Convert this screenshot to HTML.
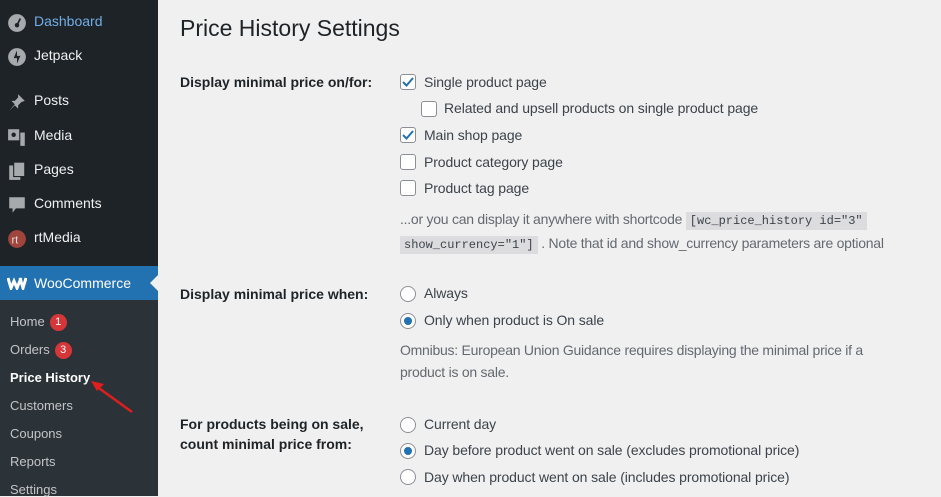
<!DOCTYPE html>
<html><head><style>
*{margin:0;padding:0;box-sizing:border-box}
body{width:941px;height:496px;overflow:hidden;background:#f0f0f1;font-family:"Liberation Sans",sans-serif;font-size:14px;color:#3c434a;position:relative}
#side{position:absolute;left:0;top:0;width:158px;height:496px;background:#1d2327}
.mi{position:absolute;left:0;width:158px;color:#f0f0f1;font-size:14px}
.mi .ic{position:absolute;left:7px;width:20px;height:20px}
.mi span.t{position:absolute;left:34px}
#woo{position:absolute;left:0;top:266px;width:158px;height:34px;background:#2271b1}
#sub{position:absolute;left:0;top:300px;width:158px;height:196px;background:#2c3338}
.si{position:absolute;left:10px;font-size:13px;color:#c3c4c7}
.bd{display:inline-block;background:#d63638;color:#fff;border-radius:9px;width:17px;height:17px;font-size:11px;text-align:center;line-height:17px;margin-left:5px;vertical-align:1px}
h1{position:absolute;left:180px;top:15px;font-size:23px;font-weight:400;color:#1d2327}
.lb{position:absolute;left:180px;font-weight:bold;font-size:14px;color:#1d2327;line-height:20px}
.op{position:absolute;font-size:14px;color:#3c434a;letter-spacing:-0.1px}
.cb{position:absolute;width:16px;height:16px;border:1px solid #8c8f94;border-radius:3px;background:#fff}
.rd{position:absolute;width:16px;height:16px;border:1px solid #8c8f94;border-radius:50%;background:#fff}
.rd.on::after{content:"";position:absolute;left:3px;top:3px;width:8px;height:8px;border-radius:50%;background:#2271b1}
.desc{position:absolute;left:400px;color:#646970;font-size:14px;line-height:22px;letter-spacing:-0.25px}
code{font-family:"Liberation Mono",monospace;font-size:12px;letter-spacing:0;background:#dcdcde;padding:2px 4px;color:#3c434a}
</style></head><body>
<div id="side">
<div class="mi" style="top:13px;color:#72aee6"><svg class="ic" viewBox="0 0 18 18" style="top:0"><circle cx="9" cy="9" r="8" fill="#a7aaad"/><circle cx="9" cy="11" r="2" fill="#1d2327"/><path d="M9 11L12 5" stroke="#1d2327" stroke-width="1.5"/></svg><span class="t">Dashboard</span></div>
<div class="mi" style="top:47px"><svg class="ic" viewBox="0 0 18 18" style="top:0"><circle cx="9" cy="9" r="8" fill="#a7aaad"/><path d="M9 3L6 10h3v5l3-7H9z" fill="#1d2327"/></svg><span class="t">Jetpack</span></div>
<div class="mi" style="top:92px"><svg class="ic" viewBox="0 0 18 18" style="top:0"><path d="M10 2l6 6-3 1-3 3v3l-3-3-5 5 5-6-3-3h3l3-3z" fill="#a7aaad"/></svg><span class="t">Posts</span></div>
<div class="mi" style="top:127px"><svg class="ic" viewBox="0 0 18 18" style="top:0"><rect x="1" y="2" width="10" height="10" fill="#a7aaad"/><rect x="12" y="5" width="4" height="12" fill="#a7aaad"/><circle cx="6" cy="7" r="2" fill="#1d2327"/></svg><span class="t">Media</span></div>
<div class="mi" style="top:161px"><svg class="ic" viewBox="0 0 18 18" style="top:0"><rect x="2" y="4" width="10" height="13" fill="#a7aaad"/><rect x="6" y="1" width="10" height="13" fill="#a7aaad" stroke="#1d2327"/></svg><span class="t">Pages</span></div>
<div class="mi" style="top:195px"><svg class="ic" viewBox="0 0 18 18" style="top:0"><path d="M2 2h14v10H8l-3 4v-4H2z" fill="#a7aaad"/></svg><span class="t">Comments</span></div>
<div class="mi" style="top:229px"><svg class="ic" viewBox="0 0 18 18" style="top:0"><circle cx="9" cy="9" r="8" fill="#a0453c"/><text x="4" y="13" font-size="10" fill="#ddd" font-family="Liberation Sans">rt</text></svg><span class="t">rtMedia</span></div>
</div>
<div id="woo"><div class="mi" style="top:9px;color:#fff"><svg class="ic" viewBox="0 0 20 14" style="top:1px;width:20px;height:14px"><path d="M1 2l3 10 3-7 3 7 4-10M13 2l3 10 3-10" stroke="#fff" stroke-width="3" fill="none"/></svg><span class="t">WooCommerce</span></div>
<div style="position:absolute;right:0;top:9px;width:0;height:0;border-top:8px solid transparent;border-bottom:8px solid transparent;border-right:8px solid #f0f0f1"></div></div>
<div id="sub">
<div class="si" style="top:14px">Home<span class="bd">1</span></div>
<div class="si" style="top:42px">Orders<span class="bd">3</span></div>
<div class="si" style="top:70px;color:#fff;font-weight:bold">Price History</div>
<div class="si" style="top:98px">Customers</div>
<div class="si" style="top:126px">Coupons</div>
<div class="si" style="top:154px">Reports</div>
<div class="si" style="top:182px">Settings</div>
</div>
<svg style="position:absolute;left:88px;top:378px" width="46" height="36"><path d="M44 34L8 8" stroke="#e01e1e" stroke-width="2.5"/><path d="M3 3l13 3-7 7z" fill="#e01e1e"/></svg>

<h1>Price History Settings</h1>
<div class="lb" style="top:72px">Display minimal price on/for:</div>
<div class="cb" style="left:400px;top:74px"><svg width="14" height="14" viewBox="0 0 14 14"><path d="M2 7l3.5 3.5L12 3" stroke="#2271b1" stroke-width="2" fill="none"/></svg></div><div class="op" style="left:424px;top:74px">Single product page</div>
<div class="cb" style="left:421px;top:101px"></div><div class="op" style="left:444px;top:100px">Related and upsell products on single product page</div>
<div class="cb" style="left:400px;top:127px"><svg width="14" height="14" viewBox="0 0 14 14"><path d="M2 7l3.5 3.5L12 3" stroke="#2271b1" stroke-width="2" fill="none"/></svg></div><div class="op" style="left:424px;top:127px">Main shop page</div>
<div class="cb" style="left:400px;top:154px"></div><div class="op" style="left:424px;top:154px">Product category page</div>
<div class="cb" style="left:400px;top:180px"></div><div class="op" style="left:424px;top:180px">Product tag page</div>
<div class="desc" style="top:208px">...or you can display it anywhere with shortcode <code>[wc_price_history id="3"</code><br><code>show_currency="1"]</code> . Note that id and show_currency parameters are optional</div>

<div class="lb" style="top:284px">Display minimal price when:</div>
<div class="rd" style="left:400px;top:286px"></div><div class="op" style="left:424px;top:285px">Always</div>
<div class="rd on" style="left:400px;top:313px"></div><div class="op" style="left:424px;top:312px">Only when product is On sale</div>
<div class="desc" style="top:339px">Omnibus: European Union Guidance requires displaying the minimal price if a<br>product is on sale.</div>

<div class="lb" style="top:414px">For products being on sale,<br>count minimal price from:</div>
<div class="rd" style="left:400px;top:417px"></div><div class="op" style="left:424px;top:416px">Current day</div>
<div class="rd on" style="left:400px;top:443px"></div><div class="op" style="left:424px;top:442px">Day before product went on sale (excludes promotional price)</div>
<div class="rd" style="left:400px;top:469px"></div><div class="op" style="left:424px;top:469px">Day when product went on sale (includes promotional price)</div>
</body></html>
